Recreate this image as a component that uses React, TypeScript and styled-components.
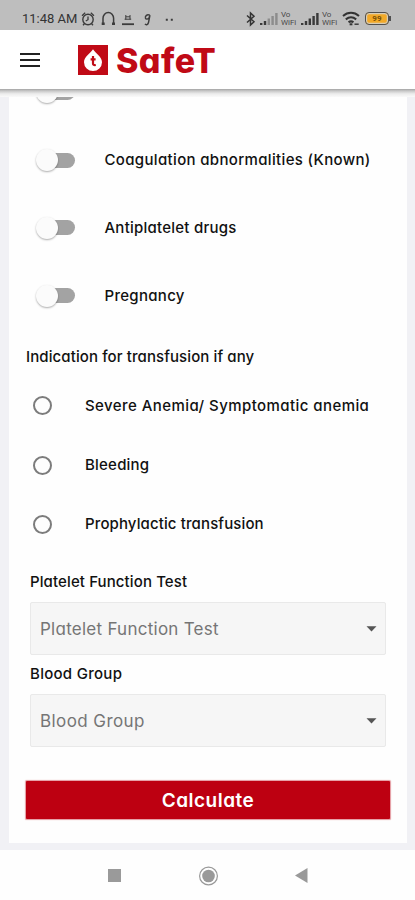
import React from "react";
import styled, { createGlobalStyle } from "styled-components";

const GlobalStyle = createGlobalStyle`
  *, *::before, *::after { box-sizing: border-box; }
  body {
    margin: 0;
    background: #fff;
    color: #111;
    font-family: Inter, "Open Sans", sans-serif;
    font-feature-settings: "cv11";
  }
`;

const Screen = styled.div`
  display: flex;
  flex-direction: column;
  width: 415px;
  height: 900px;
  overflow: hidden;
  background: #fefefe;
`;

const StatusBar = styled.div`
  flex: none;
  display: flex;
  align-items: center;
  justify-content: space-between;
  height: 30px;
  padding: 7px 24.5px 0 22px;
  background: #bebebe;
  color: #333;
`;

const StatusGroup = styled.div`
  display: flex;
  align-items: center;
  height: 22px;
`;

const Clock = styled.span`
  width: 56px;
  font: 400 13px/22px Roboto, sans-serif;
  white-space: nowrap;
`;

const Header = styled.header`
  flex: none;
  display: flex;
  align-items: center;
  height: 59px;
  padding-left: 20px;
  background: #fff;
`;

const MenuButton = styled.button`
  display: flex;
  flex-direction: column;
  gap: 4px;
  width: 20px;
  margin-right: 38px;
  padding: 0;
  border: 0;
  background: none;
`;

const MenuBar = styled.span`
  height: 2px;
  background: #222;
`;

const BrandName = styled.span`
  margin-left: 8px;
  padding-top: 2px;
  color: #c00a16;
  font-size: 34px;
  font-weight: 800;
  line-height: 40px;
  letter-spacing: 0.4px;
`;

const HeaderShade = styled.div`
  flex: none;
  height: 8px;
  background: linear-gradient(#a4a4a4, #c9c9c9 25%, #ececec 60%, #fafafa);
`;

const Page = styled.main`
  flex: none;
  height: 753px;
  padding: 0 8px 7px 8.5px;
  overflow: hidden;
  background: #f1f1f5;
`;

const Card = styled.section`
  height: 746px;
  padding: 0 17px 0 17.5px;
  overflow: hidden;
  background: #fefefe;
`;

const ToggleList = styled.div`
  margin-top: -38.5px;
`;

const ToggleRow = styled.label`
  display: flex;
  align-items: center;
  height: 67.8px;
  padding-left: 14px;
`;

const ToggleTrack = styled.span`
  display: flex;
  align-items: center;
  width: 34.5px;
  height: 15px;
  margin-right: 30px;
  border-radius: 8px;
  background: #a3a3a3;
`;

const ToggleThumb = styled.span`
  flex: none;
  width: 22px;
  height: 22px;
  margin-left: -4px;
  border-radius: 50%;
  background: #fbfbfb;
  box-shadow: 0 1px 2px rgba(0, 0, 0, 0.32);
`;

const Label = styled.span<{ $track: number }>`
  font-size: 15px;
  font-weight: 500;
  line-height: 22px;
  letter-spacing: ${(p) => p.$track}px;
  white-space: nowrap;
`;

const SectionTitle = styled.div`
  display: flex;
  align-items: center;
  height: 46.7px;
  padding-top: 7px;
`;

const RadioRow = styled.label`
  display: flex;
  align-items: center;
  height: 59.2px;
  padding-left: 7px;
`;

const RadioDot = styled.span`
  width: 19px;
  height: 19px;
  margin-right: 33px;
  border: 2px solid #7c7c7c;
  border-radius: 50%;
`;

const Field = styled.div<{ $gap: number }>`
  display: flex;
  flex-direction: column;
  gap: ${(p) => p.$gap}px;
  padding: 0 4px;
`;

const Fields = styled.div`
  display: flex;
  flex-direction: column;
  gap: 8px;
  margin-top: 17px;
`;

const SelectBox = styled.div`
  display: flex;
  align-items: center;
  justify-content: space-between;
  height: 53px;
  padding: 0 8px 0 9px;
  border: 1px solid #e9e9e9;
  border-radius: 2px;
  background: #f6f6f6;
`;

const Placeholder = styled.span<{ $track: number }>`
  color: #757575;
  font-size: 17px;
  line-height: 24px;
  letter-spacing: ${(p) => p.$track}px;
`;

const CalculateButton = styled.button`
  display: block;
  width: 364px;
  height: 38px;
  margin-top: 34px;
  padding: 0;
  border: 0;
  border-radius: 1px;
  background: #bd0011;
  box-shadow: 0 0 1px 0.5px rgba(189, 0, 17, 0.4);
  color: #fff;
  font: inherit;
  font-size: 19px;
  font-weight: 600;
  letter-spacing: 0.5px;
`;

const NavBar = styled.nav`
  flex: 1;
  display: flex;
  align-items: center;
  justify-content: space-between;
  padding: 1px 107.5px 0 107.5px;
  background: #fefefe;
`;

const toggles = [
  { text: "", track: 0 },
  { text: "Coagulation abnormalities (Known)", track: 0.34 },
  { text: "Antiplatelet drugs", track: 0.24 },
  { text: "Pregnancy", track: 0.3 },
];

const radios = [
  { text: "Severe Anemia/ Symptomatic anemia", track: 0.43 },
  { text: "Bleeding", track: 0.22 },
  { text: "Prophylactic transfusion", track: 0.12 },
];

const selects = [
  { text: "Platelet Function Test", track: 0.11, placeholderTrack: 0.26, gap: 9.5 },
  { text: "Blood Group", track: 0.28, placeholderTrack: 0.42, gap: 9 },
];

const StatusIcons = () => (
  <svg width="100" height="22" viewBox="78 7 100 22" fill="none" stroke="#3c3c3c">
    <circle cx="88" cy="18.500" r="5.200" strokeWidth="1.400" />
    <path d="M82 14.700l3.200-2.900M94 14.700l-3.200-2.900M88 15.500v3.200l-2.200 1.300M84.400 22.700l-1.400 1.600M91.600 22.700l1.400 1.600" strokeWidth="1.300" />
    <path d="M103 23.500v-6.200a5.300 5.800 0 0 1 10.600 0v6.200" strokeWidth="1.500" />
    <path d="M101.700 22.800h3M112 22.800h3" strokeWidth="2.600" />
    <path d="M122 23.200h12" strokeWidth="1.800" />
    <path d="M125.800 14v4.500M130 14v4.500M124.600 18.200h6.600M125.800 15.800h4.200" strokeWidth="1" />
    <path d="M149.800 14.200c-2.800-1.400-4.800.8-4.400 2.800.5 1.700 2.900 1.400 3.700-.4l.9-2.400-1.500 7.300c-.5 2.200-2.300 2.800-3.600 1.600" strokeWidth="1.400" />
    <path d="M165.800 18.800h2M170.800 18.800h2" strokeWidth="2" />
  </svg>
);

const BluetoothIcon = styled.svg`
  margin-right: 3px;
`;

const Bluetooth = () => (
  <BluetoothIcon width="12" height="16" viewBox="0 0 12 16" fill="none" stroke="#333" strokeWidth="1.500">
    <path d="M2 4.500l7 6.200L5.500 14V2L9 5.200 2 11.500" />
  </BluetoothIcon>
);

const Signal = ({ strong }: { strong?: boolean }) => (
  <svg width="19" height="14" viewBox="0 0 19 14">
    {[2, 4, 6.5, 9, 12].map((h, i) => (
      <rect key={h} x={i * 3.8} y={13 - h} width="2.400" height={h} fill={strong || i < 2 ? "#3a3a3a" : "#8c8c8c"} />
    ))}
  </svg>
);

const CarrierMark = styled.span`
  display: flex;
  flex-direction: column;
  width: 17px;
  margin: 0 3px 0 2px;
  color: #4a4a4a;
  font: 400 8px/8px Roboto, sans-serif;
`;

const Wifi = () => (
  <svg width="18" height="15" viewBox="0 0 18 15" fill="none" stroke="#333" strokeWidth="2">
    <path d="M1 5c4.800-4.300 11.200-4.300 16 0M3.800 8.400c3.200-2.600 7.200-2.600 10.400 0M6.500 11.300c1.500-1.100 3.500-1.100 5 0" />
    <path d="M7.600 13.300h2.800" />
    <path d="M12.500 13.200h4.200" strokeWidth="1.400" />
  </svg>
);

const Battery = styled.span`
  display: flex;
  align-items: center;
  justify-content: center;
  width: 24px;
  height: 13px;
  margin-left: 5px;
  border: 1px solid #505050;
  border-radius: 4px;
  background: #f2a928;
  box-shadow: inset 0 0 0 1.2px #d9cdb5;
  color: #7b5309;
  font: 700 8px/9px Roboto, sans-serif;
`;

const BatteryTip = styled.span`
  width: 1.6px;
  height: 5px;
  background: #505050;
`;

const Logo = () => (
  <svg width="30" height="30" viewBox="0 0 30 30">
    <rect width="30" height="30" fill="#c00a16" />
    <path d="M15 4.200C12.400 8.200 6 11.700 6 17.300a9 8.700 0 0 0 18 0C24 11.700 17.600 8.200 15 4.200z" fill="#fff" />
    <path d="M15 11v7.500q0 2 2.800 1.500M12.600 14.300h5" fill="none" stroke="#c00a16" strokeWidth="2.200" />
  </svg>
);

const Caret = () => (
  <svg width="11" height="6" viewBox="0 0 11 6">
    <path d="M.5.300h10L5.500 5.600z" fill="#555" />
  </svg>
);

export default function App() {
  return (
    <Screen>
      <GlobalStyle />
      <StatusBar>
        <StatusGroup>
          <Clock>11:48 AM</Clock>
          <StatusIcons />
        </StatusGroup>
        <StatusGroup>
          <Bluetooth />
          <Signal />
          <CarrierMark><span>Vo</span><span>WiFi</span></CarrierMark>
          <Signal strong />
          <CarrierMark><span>Vo</span><span>WiFi</span></CarrierMark>
          <Wifi />
          <Battery>99</Battery>
          <BatteryTip />
        </StatusGroup>
      </StatusBar>
      <Header>
        <MenuButton aria-label="Menu">
          <MenuBar />
          <MenuBar />
          <MenuBar />
        </MenuButton>
        <Logo />
        <BrandName>SafeT</BrandName>
      </Header>
      <HeaderShade />
      <Page>
        <Card>
          <ToggleList>
            {toggles.map((t, i) => (
              <ToggleRow key={i}>
                <ToggleTrack><ToggleThumb /></ToggleTrack>
                {t.text && <Label $track={t.track}>{t.text}</Label>}
              </ToggleRow>
            ))}
          </ToggleList>
          <SectionTitle>
            <Label $track={0.1}>Indication for transfusion if any</Label>
          </SectionTitle>
          {radios.map((r) => (
            <RadioRow key={r.text}>
              <RadioDot />
              <Label $track={r.track}>{r.text}</Label>
            </RadioRow>
          ))}
          <Fields>
            {selects.map((s) => (
              <Field key={s.text} $gap={s.gap}>
                <Label $track={s.track}>{s.text}</Label>
                <SelectBox>
                  <Placeholder $track={s.placeholderTrack}>{s.text}</Placeholder>
                  <Caret />
                </SelectBox>
              </Field>
            ))}
          </Fields>
          <CalculateButton>Calculate</CalculateButton>
        </Card>
      </Page>
      <NavBar>
        <svg width="13" height="13" viewBox="0 0 13 13"><rect width="13" height="13" fill="#9a9a9a" /></svg>
        <svg width="20" height="20" viewBox="0 0 20 20">
          <circle cx="10.500" cy="10" r="8.900" fill="none" stroke="#999" strokeWidth="1.200" />
          <circle cx="10.500" cy="10" r="6.300" fill="#999" />
        </svg>
        <svg width="13" height="15" viewBox="0 0 13 15"><path d="M0 7.500L12.500 0v15z" fill="#999" /></svg>
      </NavBar>
    </Screen>
  );
}
